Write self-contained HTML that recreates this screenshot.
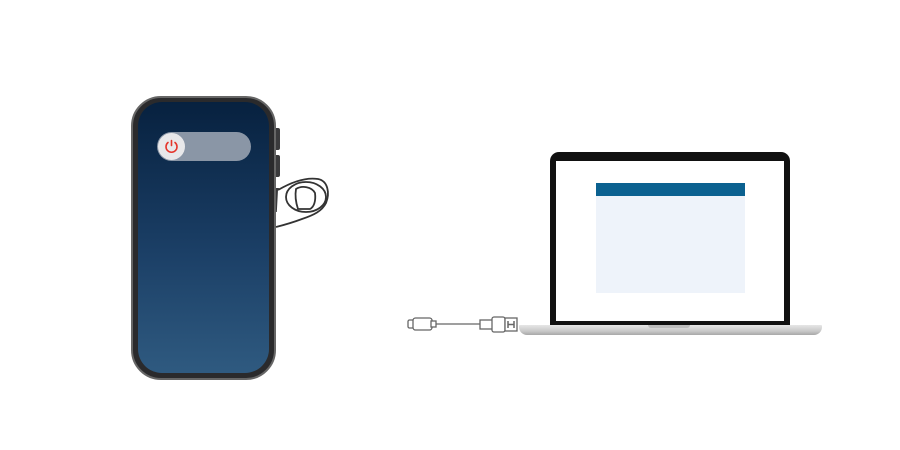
<!DOCTYPE html>
<html><head><style>
body{margin:0;width:900px;height:450px;background:#fff;position:relative;overflow:hidden;font-family:"Liberation Sans",sans-serif}
div{position:absolute;box-sizing:border-box}
</style></head><body>
<!-- phone side buttons -->
<div style="left:272px;top:128px;width:8px;height:22px;background:#3a3a3c;border-radius:2px"></div>
<div style="left:272px;top:155px;width:8px;height:22px;background:#3a3a3c;border-radius:2px"></div>
<div style="left:272px;top:188px;width:8px;height:24px;background:#3a3a3c;border-radius:2px"></div>
<!-- phone -->
<div style="left:131px;top:96px;width:145px;height:284px;border-radius:30px;background:#2a2a2c;border:2px solid #666"></div>
<div style="left:138px;top:102px;width:131px;height:271px;border-radius:24px;background:linear-gradient(#07213f,#1b3f66 55%,#2f5a80)"></div>
<div style="left:157px;top:132px;width:94px;height:29px;border-radius:15px;background:#8a96a6"></div>
<div style="left:158px;top:133px;width:27px;height:27px;border-radius:50%;background:#e8e8ea"></div>
<svg style="position:absolute;left:158px;top:133px" width="27" height="27" viewBox="0 0 27 27"><path d="M10 9.5a5.5 5.5 0 1 0 7 0" fill="none" stroke="#e5352b" stroke-width="1.6" stroke-linecap="round"/><path d="M13.5 7.5v5" stroke="#e5352b" stroke-width="1.6" stroke-linecap="round"/></svg>
<!-- finger -->
<svg style="position:absolute;left:270px;top:175px" width="65" height="60" viewBox="0 0 65 60">
<path d="M8 15 C20 8 35 2 48 4 C58 6 60 18 56 28 C52 36 44 40 32 44 C24 47 14 50 6 52" fill="#fff" stroke="#333" stroke-width="1.8"/>
<ellipse cx="36" cy="22" rx="20" ry="15" fill="#fff" stroke="#333" stroke-width="1.8"/>
<path d="M26 14 C32 10 42 12 45 18 C46 26 44 32 40 34 L28 34 C26 28 25 20 26 14Z" fill="#fff" stroke="#333" stroke-width="1.8"/>
</svg>
<!-- laptop -->
<div style="left:550px;top:152px;width:240px;height:175px;background:#111;border-radius:9px 9px 0 0"></div>
<div style="left:556px;top:161px;width:228px;height:160px;background:#fff"></div>
<div style="left:596px;top:183px;width:149px;height:110px;background:#eef3fa"></div>
<div style="left:596px;top:183px;width:149px;height:13px;background:#0b6190"></div>
<div style="left:519px;top:325px;width:303px;height:10px;background:linear-gradient(#e6e6e6,#c9c9c9 60%,#a8a8a8);border-radius:1px 1px 8px 8px"></div>
<div style="left:648px;top:325px;width:42px;height:3px;background:#bdbdbd;border-radius:0 0 4px 4px"></div>
<!-- cable -->
<svg style="position:absolute;left:405px;top:314px" width="115" height="22" viewBox="0 0 115 22">
<g fill="#fff" stroke="#666" stroke-width="1.3">
<rect x="3" y="6" width="7" height="8" rx="1.5"/>
<rect x="8" y="4" width="19" height="12" rx="2.5"/>
<rect x="26" y="7" width="5" height="6"/>
<line x1="31" y1="10" x2="75" y2="10"/>
<rect x="75" y="6" width="18" height="9"/>
<rect x="87" y="3" width="13" height="15" rx="2"/>
<rect x="100" y="4" width="12" height="13"/>
</g>
<path d="M103 7v7M109 7v7M103 10.5h6" stroke="#666" stroke-width="1.5"/>
</svg>
</body></html>
